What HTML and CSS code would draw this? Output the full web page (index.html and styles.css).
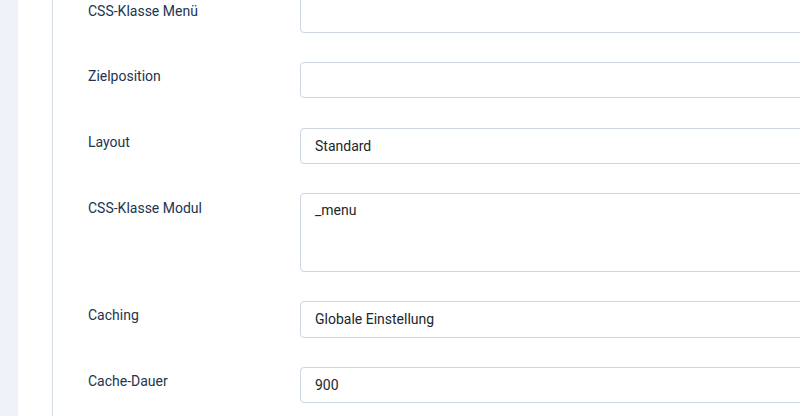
FILE: index.html
```html
<!DOCTYPE html>
<html lang="de">
<head>
<meta charset="utf-8">
<link rel="stylesheet" href="styles.css">
</head>
<body>
<div class="page">
  <aside class="strip"></aside>
  <main class="main">
    <div class="panel">
      <form class="form">
        <div class="row">
          <label class="label">CSS-Klasse Menü</label>
          <input class="field" type="text" value="">
        </div>
        <div class="row">
          <label class="label">Zielposition</label>
          <input class="field" type="text" value="">
        </div>
        <div class="row">
          <label class="label">Layout</label>
          <div class="field select">Standard</div>
        </div>
        <div class="row">
          <label class="label">CSS-Klasse Modul</label>
          <textarea class="field area">_menu</textarea>
        </div>
        <div class="row">
          <label class="label">Caching</label>
          <div class="field select">Globale Einstellung</div>
        </div>
        <div class="row">
          <label class="label">Cache-Dauer</label>
          <input class="field" type="text" value="900">
        </div>
      </form>
    </div>
  </main>
</div>
</body>
</html>
```
FILE: styles.css
```css
html, body {
  margin: 0;
  padding: 0;
  height: 100%;
  overflow: hidden;
  background: #ffffff;
  font-family: Roboto, "Liberation Sans", sans-serif;
}
.page {
  display: flex;
  height: 416px;
}
.strip {
  width: 18px;
  flex: none;
  background: #eef3fa;
}
.main {
  flex: 1;
  padding-left: 34px;
  background: #ffffff;
}
.panel {
  display: flow-root;
  height: 100%;
  border-left: 1px solid #d3dde5;
  padding-left: 35px;
}
.form {
  display: flex;
  flex-direction: column;
  gap: 29.2px;
  margin-top: -4px;
}
.row {
  display: grid;
  grid-template-columns: 212px 580px;
  align-items: start;
}
.label {
  padding-top: 4.5px;
  font-size: 14px;
  line-height: 21px;
  color: #22344f;
}
.field {
  box-sizing: border-box;
  height: 36.6px;
  margin: 0;
  padding: 0 14px;
  border: 1px solid #cdd5de;
  border-radius: 4px;
  background: #ffffff;
  font-family: Roboto, "Liberation Sans", sans-serif;
  font-size: 14px;
  color: #22262a;
  outline: none;
}
.select {
  display: flex;
  align-items: center;
}
.area {
  height: 78.4px;
  padding-top: 5.5px;
  line-height: 21px;
  resize: none;
}
```
